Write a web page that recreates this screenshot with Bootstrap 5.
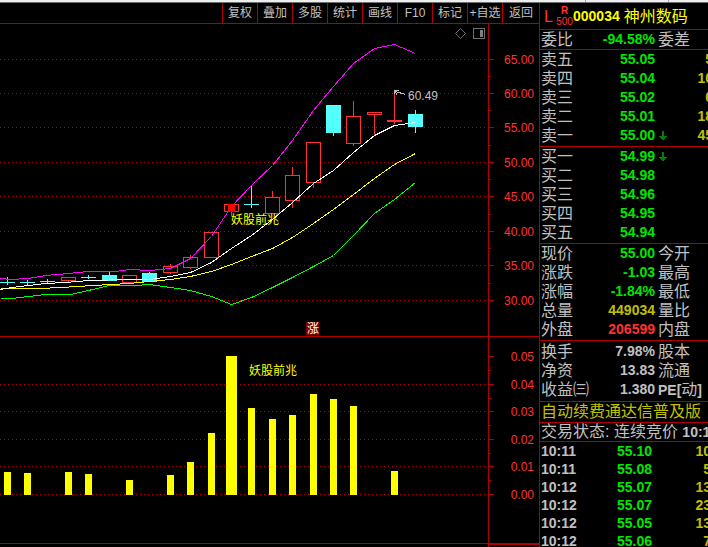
<!DOCTYPE html>
<html lang="zh-CN">
<head>
<meta charset="utf-8">
<meta name="viewport" content="width=device-width, initial-scale=1">
<title>000034 神州数码</title>
<link href="https://cdn.jsdelivr.net/npm/bootstrap@5.3.0/dist/css/bootstrap.min.css" rel="stylesheet">
<style>
:root{--line:#b00000;--txt:#c0c0c0;--up:#ff3232;--down:#00e600;--vol:#c0c000}
body{background:#000;color:var(--txt);font-family:"Liberation Sans","Noto Sans CJK SC",sans-serif;font-size:16px;line-height:19px}
.titlestrip{height:3px;background:#eceef0;border-bottom:1px solid #707070;flex:none}
.titlestrip i{width:83px;border-left:1px solid #a0a0a0}
.titlestrip i:last-child{width:40px}
.toolbar{height:21px;border-bottom:1px solid var(--line)}
.toolbar .btn{width:35px;padding:0;border:0;border-left:1px solid var(--line);border-radius:0;font-size:12px;line-height:20px;color:var(--txt);white-space:nowrap}
.toolbar .btn:last-child{width:37px}
.chartpane{min-width:0}
.chartpane svg{width:100%;height:auto}
.chartpane text{font-size:12px}
.quotes{width:169px;border-left:1px solid var(--line)}
.block-line{border-bottom:1px solid var(--line)}
.stockhead{height:27px;padding-left:4px}
.flag-l{font-size:16px;color:var(--up);width:12px}
.flag-r{font-size:10px;line-height:11px;color:var(--up);width:17px}
.code{font-size:14px;font-weight:700;color:#ff0}
.stockname{font-size:16px;color:#ff0;margin-left:4px}
.quotetable{width:173px;table-layout:fixed;border-collapse:collapse}
.quotetable th,.quotetable td{padding:0;height:19px;line-height:19px;white-space:nowrap;overflow:visible}
.quotetable th{font-weight:400;padding-left:1px}
.quotetable td{font-size:14px;font-weight:700;text-align:right}
.quotetable th + td + th{padding-left:3px}
.quotetable .arrowcell{text-align:left;padding-left:4px}
.cola{width:51px}.colb{width:64px}.colc{width:41px}.colp{width:61px}
.five{padding-bottom:1px}
.three{padding:1px 0 2px}
.notice{height:21px;line-height:20px;padding-left:1px;color:var(--vol);white-space:nowrap}
.status{height:19px;line-height:18px;padding-left:1px;white-space:nowrap}
.status b,.pe{font-size:14px;font-weight:700;line-height:1}
.quotetable.ticks{width:171px}
.quotetable.ticks td{height:18px;line-height:18px}
.ticks td:first-child{text-align:left;padding-left:1px}
.up{color:var(--up)}.down{color:var(--down)}.vol{color:var(--vol)}
</style>
<script defer src="https://cdn.jsdelivr.net/npm/bootstrap@5.3.0/dist/js/bootstrap.bundle.min.js"></script>
</head>
<body>
<div class="vh-100 overflow-hidden d-flex flex-column">
  <div class="titlestrip d-flex justify-content-end"><i></i><i></i></div>
  <div class="d-flex flex-grow-1 overflow-hidden">
    <main class="chartpane flex-grow-1">
      <nav class="toolbar d-flex justify-content-end" aria-label="工具栏">
        <button class="btn" type="button">复权</button><button class="btn" type="button">叠加</button><button class="btn" type="button">多股</button><button class="btn" type="button">统计</button><button class="btn" type="button">画线</button><button class="btn" type="button">F10</button><button class="btn" type="button">标记</button><button class="btn" type="button">+自选</button><button class="btn" type="button">返回</button>
      </nav>
      <svg id="price" class="d-block" viewBox="0 24 539 313" shape-rendering="crispEdges" role="img" aria-label="K线图"></svg>
      <svg id="signal" class="d-block" viewBox="0 337 539 210" shape-rendering="crispEdges" role="img" aria-label="妖股前兆"></svg>
    </main>
    <aside class="quotes flex-shrink-0 overflow-hidden">
      <header class="stockhead block-line d-flex align-items-center">
        <span class="flag-l">L</span>
        <span class="flag-r text-center"><b class="d-block">R</b>500</span>
        <span class="code">000034</span><span class="stockname text-nowrap">神州数码</span>
      </header>
      <div class="block-line">
        <table class="quotetable"><colgroup><col class="cola"><col class="colb"><col class="colc"><col></colgroup>
          <tr><th>委比</th><td class="down">-94.58%</td><th>委差</th><td></td></tr></table>
      </div>
      <div class="block-line five">
        <table class="quotetable"><colgroup><col class="cola"><col class="colb"><col class="colc"><col></colgroup>
          <tr><th>卖五</th><td class="down">55.05</td><td></td><td class="vol">5</td></tr>
          <tr><th>卖四</th><td class="down">55.04</td><td></td><td class="vol">10</td></tr>
          <tr><th>卖三</th><td class="down">55.02</td><td></td><td class="vol">6</td></tr>
          <tr><th>卖二</th><td class="down">55.01</td><td></td><td class="vol">18</td></tr>
          <tr><th>卖一</th><td class="down">55.00</td><td class="arrowcell"><svg class="d-block" width="8" height="10" viewBox="0 0 8 10" fill="#008000"><path d="M3 0h2v5h3v1H7v1H6v1H5v1H3V8H2V7H1V6H0V5h3z"/></svg></td><td class="vol">45</td></tr></table>
      </div>
      <div class="block-line five">
        <table class="quotetable"><colgroup><col class="cola"><col class="colb"><col class="colc"><col></colgroup>
          <tr><th>买一</th><td class="down">54.99</td><td class="arrowcell"><svg class="d-block" width="8" height="10" viewBox="0 0 8 10" fill="#008000"><path d="M3 0h2v5h3v1H7v1H6v1H5v1H3V8H2V7H1V6H0V5h3z"/></svg></td><td></td></tr>
          <tr><th>买二</th><td class="down">54.98</td><td></td><td></td></tr>
          <tr><th>买三</th><td class="down">54.96</td><td></td><td></td></tr>
          <tr><th>买四</th><td class="down">54.95</td><td></td><td></td></tr>
          <tr><th>买五</th><td class="down">54.94</td><td></td><td></td></tr></table>
      </div>
      <div class="block-line five">
        <table class="quotetable"><colgroup><col class="cola"><col class="colb"><col class="colc"><col></colgroup>
          <tr><th>现价</th><td class="down">55.00</td><th>今开</th><td></td></tr>
          <tr><th>涨跌</th><td class="down">-1.03</td><th>最高</th><td></td></tr>
          <tr><th>涨幅</th><td class="down">-1.84%</td><th>最低</th><td></td></tr>
          <tr><th>总量</th><td class="vol">449034</td><th>量比</th><td></td></tr>
          <tr><th>外盘</th><td class="up">206599</td><th>内盘</th><td></td></tr></table>
      </div>
      <div class="block-line three">
        <table class="quotetable"><colgroup><col class="cola"><col class="colb"><col class="colc"><col></colgroup>
          <tr><th>换手</th><td>7.98%</td><th>股本</th><td></td></tr>
          <tr><th>净资</th><td>13.83</td><th>流通</th><td></td></tr>
          <tr><th>收益㈢</th><td>1.380</td><th><span class="pe">PE[</span>动<span class="pe">]</span></th><td></td></tr></table>
      </div>
      <div class="block-line notice">自动续费通达信普及版</div>
      <div class="block-line status">交易状态: 连续竞价 <b>10:1</b></div>
      <table class="quotetable ticks"><colgroup><col class="cola"><col class="colp"><col></colgroup>
        <tr><td>10:11</td><td class="down">55.10</td><td class="vol">10</td></tr>
        <tr><td>10:11</td><td class="down">55.08</td><td class="vol">5</td></tr>
        <tr><td>10:12</td><td class="down">55.07</td><td class="vol">13</td></tr>
        <tr><td>10:12</td><td class="down">55.07</td><td class="vol">23</td></tr>
        <tr><td>10:12</td><td class="down">55.05</td><td class="vol">13</td></tr>
        <tr><td>10:12</td><td class="down">55.06</td><td class="vol">7</td></tr></table>
    </aside>
  </div>
</div>
<script>
const RED = '#ff3232', LINE = '#b00000', CYAN = '#54ffff', YELLOW = '#ffff00';
const rect = (x, y, w, h, c) => `<rect x="${x}" y="${y}" width="${w}" height="${h}" fill="${c}"/>`;
const label = (x, y, c, s, a = 'start') => `<text x="${x}" y="${y}" fill="${c}" text-anchor="${a}">${s}</text>`;
const dots = y => `<path d="M0 ${y}H488" stroke="${LINE}" stroke-dasharray="1 3" transform="translate(0 .5)"/>`;
const curve = (pts, c) => `<polyline points="${pts}" fill="none" stroke="${c}" transform="translate(.5 .5)"/>`;

// Price pane: [y, axis label]
const priceAxis = [[59,'65.00'],[93,'60.00'],[127,'55.00'],[162,'50.00'],[196,'45.00'],[231,'40.00'],[265,'35.00'],[300,'30.00']];
let p = '';
priceAxis.forEach(([y, t]) => p += dots(y) + rect(489, y, 5, 1, LINE) + label(534, y + 5, RED, t, 'end'));
[76,110,145,179,214,248,283].forEach(y => p += rect(489, y, 2, 1, LINE));
p += rect(488, 24, 1, 313, LINE) + rect(0, 336, 539, 1, LINE);

// Candles: [centre, kind, body top, body bottom, wick top, wick bottom]; r = rising, f = falling
const candles = [
 [7,'f',282,282,277,284],[27,'f',282,282,280,285],[47,'f',281,281,279,282],[68,'r',277,280,277,281],
 [88,'f',277,277,275,278],[109,'f',275,280,271,280],[129,'r',275,282,275,282],[149,'f',273,281,272,281],
 [170,'r',266,272,264,273],[190,'r',257,267,255,268],[211,'r',232,257,232,257],[231,'r',204,211,204,215],
 [251,'f',204,204,186,207],[272,'r',197,213,191,213],[292,'r',175,200,167,207],[313,'r',142,182,142,187],
 [333,'f',105,132,105,135],[353,'r',116,143,101,145],[374,'r',112,114,112,134],[394,'r',120,121,90,123],
 [415,'f',114,126,110,132]];
candles.forEach(([x, k, t, b, wt, wb]) => {
  const c = k === 'r' ? RED : CYAN;
  p += rect(x, wt, 1, t - wt, c) + rect(x, b, 1, wb - b + 1, c);
  p += k === 'f' ? rect(x - 7, t, 15, b - t + 1, c)
     : `<rect x="${x - 7}" y="${t}" width="14" height="${b - t}" fill="#000" stroke="${c}" transform="translate(.5 .5)"/>`;
});
p += curve('0,298 11,298 45,294 70,294 88,290 109,285 135,285 149,284 170,287 190,290 211,296 231,304 251,297 272,287 292,277 313,266 333,255 353,235 374,213 394,199 415,182', '#00ff00');
p += curve('0,288 40,288 60,287 110,284 129,283 149,281 170,279 190,276 211,271 231,264 251,256 272,248 292,237 313,223 333,209 353,194 374,178 394,164 415,153', YELLOW);
p += curve('0,289 11,287 28,285 45,283 65,282 88,280 129,279 149,279 170,276 190,272 211,262 231,248 251,235 272,219 292,202 313,183 333,170 353,152 374,135 394,125 415,122', '#ffffff');
p += curve('0,278 10,279 28,278 45,275 68,273 88,271 115,271 129,269 149,270 170,268 190,258 211,236 231,206 251,185 272,165 292,140 313,110 333,86 353,63 374,48 394,44 415,53', '#ff00ff');
p += rect(228, 204, 7, 8, '#ff0000');
p += label(231, 224, YELLOW, '妖股前兆');
p += '<path d="M405 94L395 91M394 93v-3h4M395 92l2 3" fill="none" stroke="#c0c0c0" transform="translate(.5 .5)"/>' + label(408, 100, '#c0c0c0', '60.49');
p += rect(306, 322, 13, 13, '#800000') + label(307, 333, '#fff', '涨');
p += '<path d="M460 28l5 5-5 5-5-5z" fill="none" stroke="#707070" shape-rendering="auto" transform="translate(.5 .5)"/>';
p += '<rect x="473" y="28" width="11" height="10" rx="1" fill="none" stroke="#707070" transform="translate(.5 .5)"/>' + rect(480, 30, 3, 7, '#808080');
document.getElementById('price').innerHTML = p;

// Signal pane
let s = '';
[[356,'0.05'],[384,'0.04'],[411,'0.03'],[439,'0.02'],[466,'0.01'],[494,'0.00']].forEach(([y, t], i) => {
  s += (i ? dots(y) : '') + rect(489, y, 5, 1, LINE) + label(534, y + 5, RED, t, 'end');
});
[370,398,425,453,480].forEach(y => s += rect(489, y, 2, 1, LINE));
s += rect(488, 337, 1, 210, LINE) + rect(0, 543, 539, 1, LINE) + rect(488, 543, 51, 2, LINE);
[[4,472],[24,473],[65,472],[85,474],[126,480],[167,475],[187,462],[208,433],[226,356,11],[248,408],[269,419],[289,415],[310,394],[330,399],[350,406],[391,471]]
  .forEach(([x, y, w = 7]) => s += rect(x, y, w, 495 - y, YELLOW));
s += label(249, 375, YELLOW, '妖股前兆');
document.getElementById('signal').innerHTML = s;
</script>
</body>
</html>
